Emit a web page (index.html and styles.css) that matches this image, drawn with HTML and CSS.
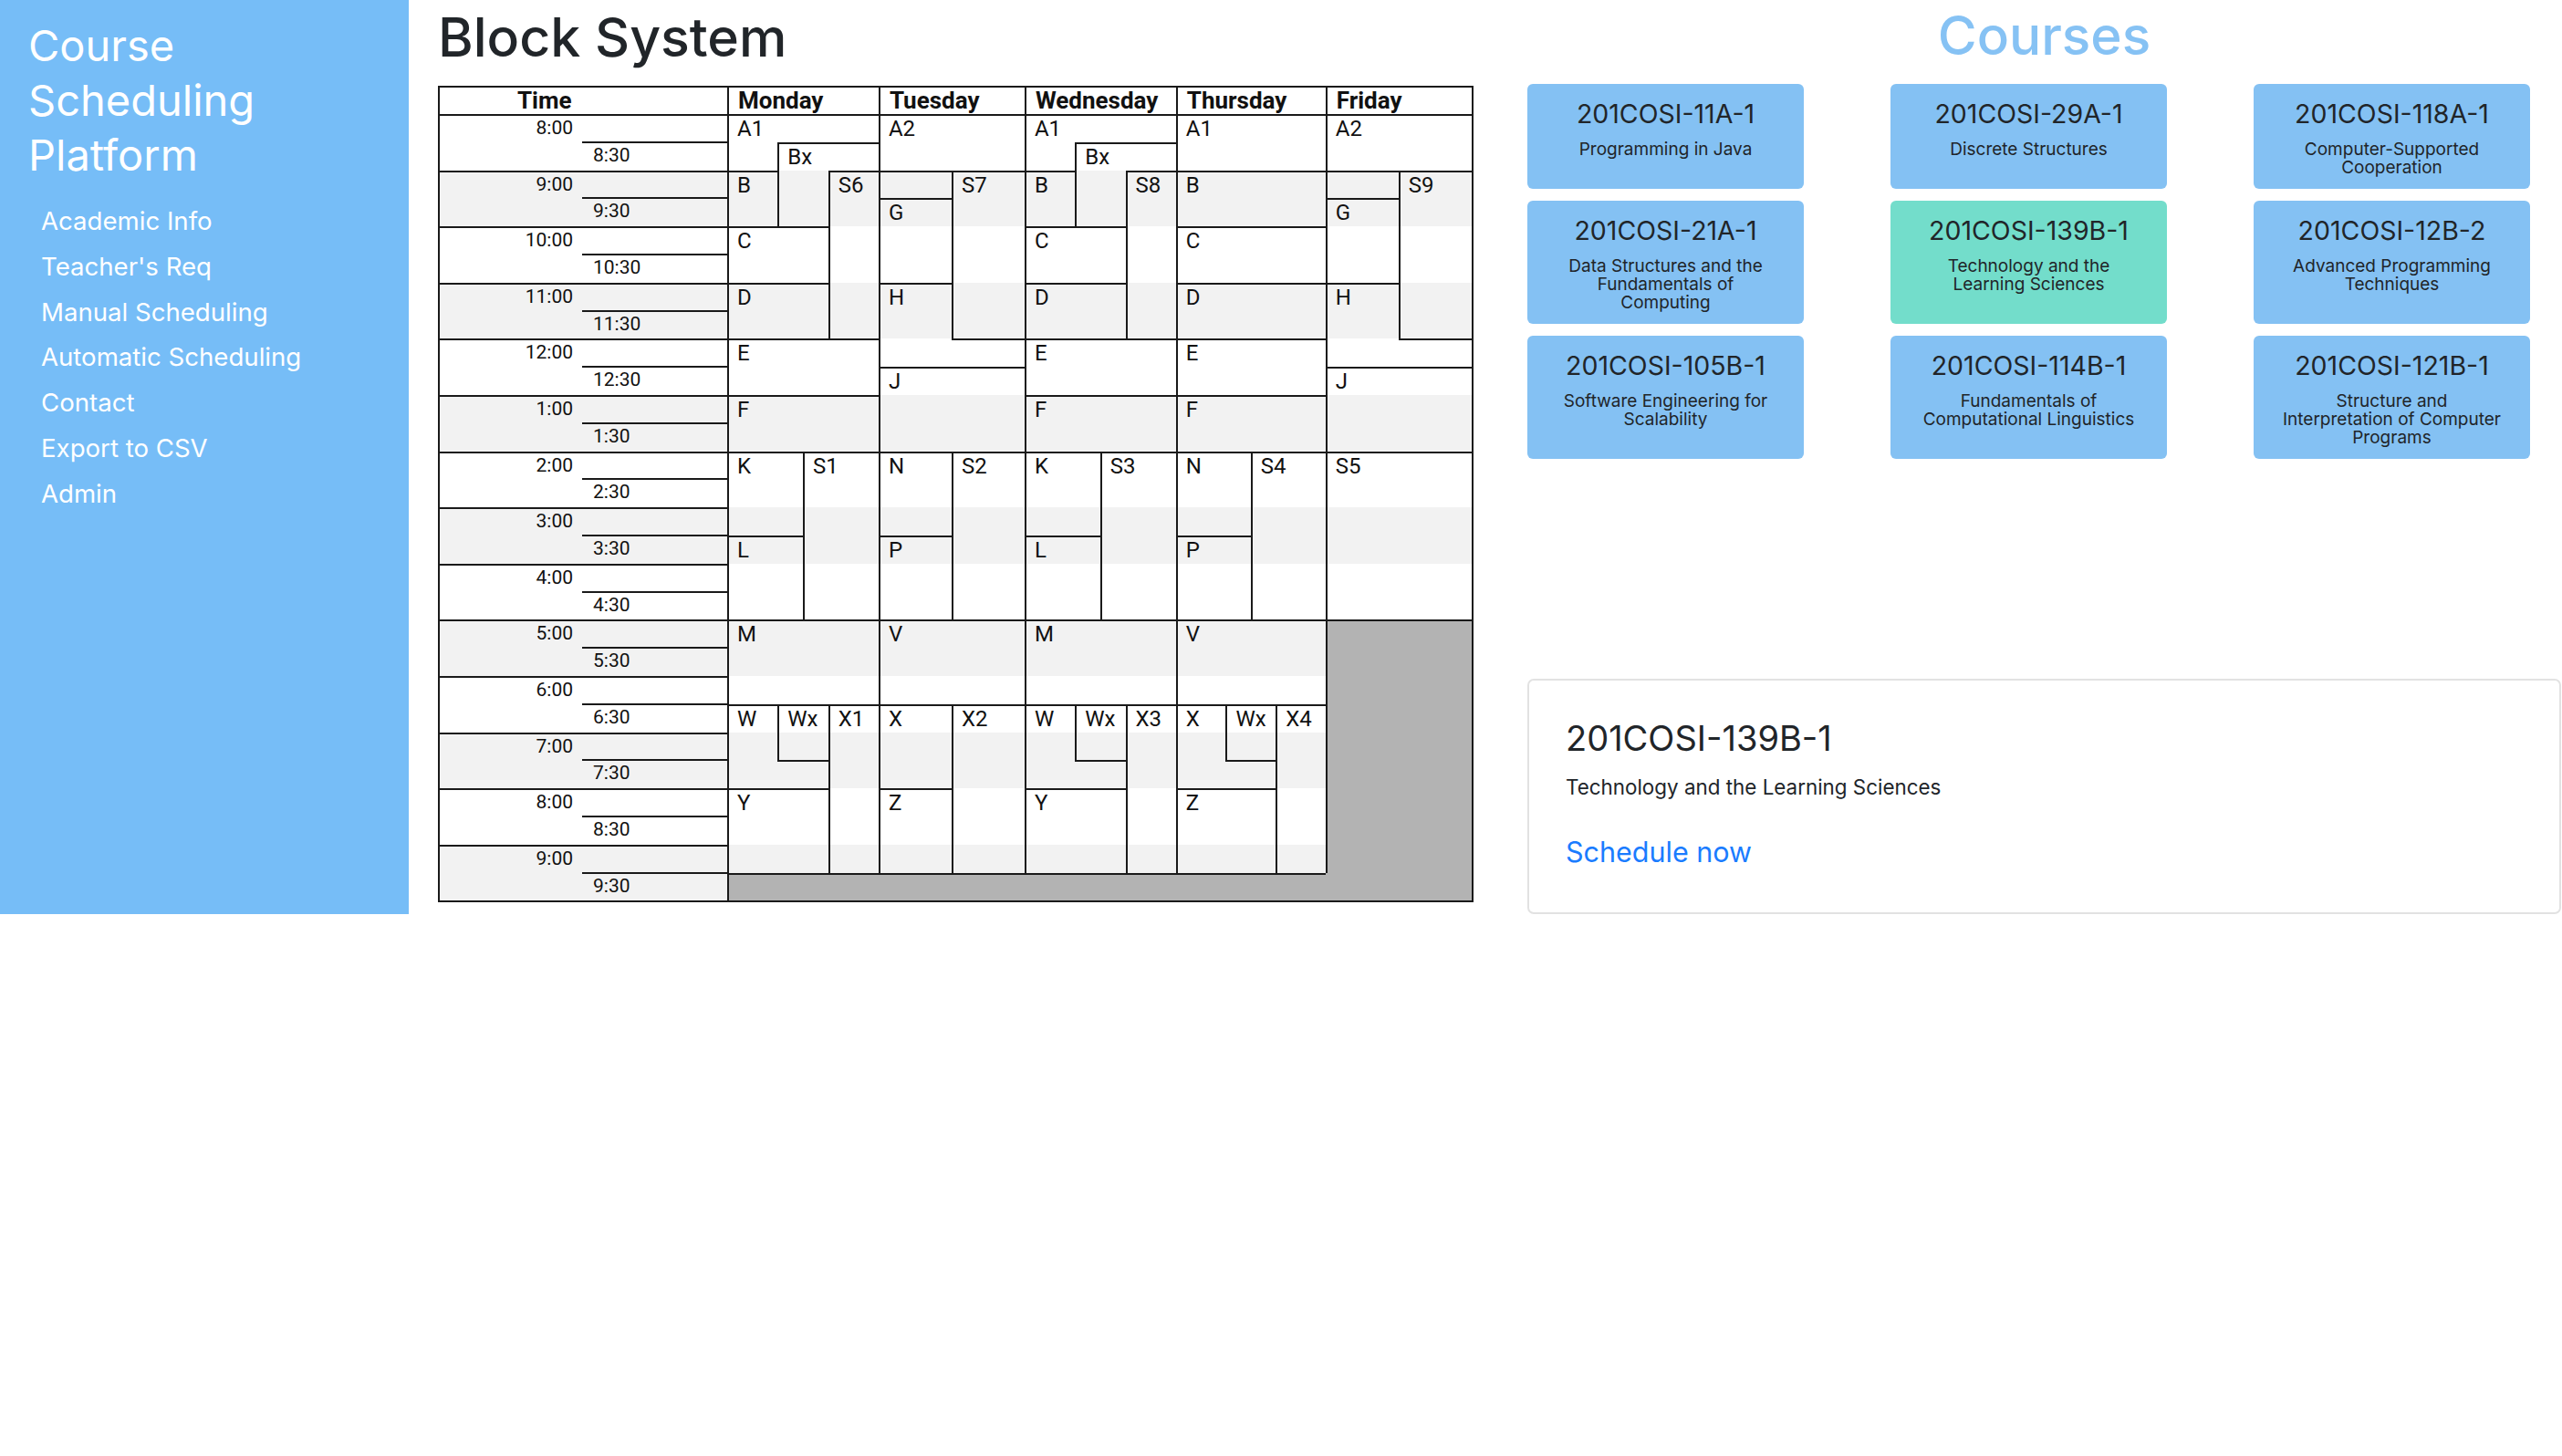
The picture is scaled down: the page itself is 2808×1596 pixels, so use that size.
FILE: index.html
```html
<!DOCTYPE html>
<html lang="en">
<head>
<meta charset="utf-8">
<title>Course Scheduling Platform</title>
<link rel="stylesheet" href="styles.css">
</head>
<body>
<div class="app">
  <aside class="sidebar">
    <h2 class="brand">Course Scheduling Platform</h2>
    <nav class="nav">
      <a href="#">Academic Info</a>
      <a href="#">Teacher's Req</a>
      <a href="#">Manual Scheduling</a>
      <a href="#">Automatic Scheduling</a>
      <a href="#">Contact</a>
      <a href="#">Export to CSV</a>
      <a href="#">Admin</a>
    </nav>
  </aside>
  <main class="main">
    <section class="left">
      <h1 class="page-title">Block System</h1>
      <div class="bs">
        <div class="stripe" style="grid-area:4/1/6/33"></div>
        <div class="stripe" style="grid-area:8/1/10/33"></div>
        <div class="stripe" style="grid-area:12/1/14/33"></div>
        <div class="stripe" style="grid-area:16/1/18/33"></div>
        <div class="stripe" style="grid-area:20/1/22/33"></div>
        <div class="stripe" style="grid-area:24/1/26/33"></div>
        <div class="stripe" style="grid-area:28/1/30/33"></div>
        <div class="dead t l" style="grid-area:29/3/30/27"></div>
        <div class="dead t l" style="grid-area:20/27/29/33"></div>
        <div class="dead" style="grid-area:29/27/30/33"></div>

        <div class="head time-head t l" style="grid-area:1/1/2/3">Time</div>
        <div class="head t l" style="grid-area:1/3/2/9">Monday</div>
        <div class="head t l" style="grid-area:1/9/2/15">Tuesday</div>
        <div class="head t l" style="grid-area:1/15/2/21">Wednesday</div>
        <div class="head t l" style="grid-area:1/21/2/27">Thursday</div>
        <div class="head t l" style="grid-area:1/27/2/33">Friday</div>

        <div class="hr t l" style="grid-area:2/1/4/3"><span class="hl">8:00</span><span class="hx"></span><span class="hh">8:30</span></div>
        <div class="hr t l" style="grid-area:4/1/6/3"><span class="hl">9:00</span><span class="hx"></span><span class="hh">9:30</span></div>
        <div class="hr t l" style="grid-area:6/1/8/3"><span class="hl">10:00</span><span class="hx"></span><span class="hh">10:30</span></div>
        <div class="hr t l" style="grid-area:8/1/10/3"><span class="hl">11:00</span><span class="hx"></span><span class="hh">11:30</span></div>
        <div class="hr t l" style="grid-area:10/1/12/3"><span class="hl">12:00</span><span class="hx"></span><span class="hh">12:30</span></div>
        <div class="hr t l" style="grid-area:12/1/14/3"><span class="hl">1:00</span><span class="hx"></span><span class="hh">1:30</span></div>
        <div class="hr t l" style="grid-area:14/1/16/3"><span class="hl">2:00</span><span class="hx"></span><span class="hh">2:30</span></div>
        <div class="hr t l" style="grid-area:16/1/18/3"><span class="hl">3:00</span><span class="hx"></span><span class="hh">3:30</span></div>
        <div class="hr t l" style="grid-area:18/1/20/3"><span class="hl">4:00</span><span class="hx"></span><span class="hh">4:30</span></div>
        <div class="hr t l" style="grid-area:20/1/22/3"><span class="hl">5:00</span><span class="hx"></span><span class="hh">5:30</span></div>
        <div class="hr t l" style="grid-area:22/1/24/3"><span class="hl">6:00</span><span class="hx"></span><span class="hh">6:30</span></div>
        <div class="hr t l" style="grid-area:24/1/26/3"><span class="hl">7:00</span><span class="hx"></span><span class="hh">7:30</span></div>
        <div class="hr t l" style="grid-area:26/1/28/3"><span class="hl">8:00</span><span class="hx"></span><span class="hh">8:30</span></div>
        <div class="hr t l" style="grid-area:28/1/30/3"><span class="hl">9:00</span><span class="hx"></span><span class="hh">9:30</span></div>

        <!-- Monday -->
        <div class="b t l" style="grid-area:2/3/3/9">A1</div>
        <div class="b l" style="grid-area:3/3/4/5"></div>
        <div class="b t l" style="grid-area:3/5/4/9">Bx</div>
        <div class="b l" style="grid-area:4/5/6/7"></div>
        <div class="b t l" style="grid-area:4/3/6/5">B</div>
        <div class="b t l" style="grid-area:4/7/10/9">S6</div>
        <div class="b t l" style="grid-area:6/3/8/7">C</div>
        <div class="b t l" style="grid-area:8/3/10/7">D</div>
        <div class="b t l" style="grid-area:10/3/12/9">E</div>
        <div class="b t l" style="grid-area:12/3/14/9">F</div>
        <div class="b t l" style="grid-area:14/3/17/6">K</div>
        <div class="b t l" style="grid-area:14/6/20/9">S1</div>
        <div class="b t l" style="grid-area:17/3/20/6">L</div>
        <div class="b t l" style="grid-area:20/3/23/9">M</div>
        <div class="b t l" style="grid-area:23/3/25/5">W</div>
        <div class="b t l" style="grid-area:23/5/25/7">Wx</div>
        <div class="b t l" style="grid-area:23/7/29/9">X1</div>
        <div class="b l" style="grid-area:25/3/26/5"></div>
        <div class="b t" style="grid-area:25/5/26/7"></div>
        <div class="b t l" style="grid-area:26/3/29/7">Y</div>

        <!-- Tuesday -->
        <div class="b t l" style="grid-area:2/9/4/15">A2</div>
        <div class="b t l" style="grid-area:4/9/5/12"></div>
        <div class="b t l" style="grid-area:4/12/10/15">S7</div>
        <div class="b t l" style="grid-area:5/9/8/12">G</div>
        <div class="b t l" style="grid-area:8/9/10/12">H</div>
        <div class="b l" style="grid-area:10/9/11/12"></div>
        <div class="b t" style="grid-area:10/12/11/15"></div>
        <div class="b t l" style="grid-area:11/9/14/15">J</div>
        <div class="b t l" style="grid-area:14/9/17/12">N</div>
        <div class="b t l" style="grid-area:14/12/20/15">S2</div>
        <div class="b t l" style="grid-area:17/9/20/12">P</div>
        <div class="b t l" style="grid-area:20/9/23/15">V</div>
        <div class="b t l" style="grid-area:23/9/26/12">X</div>
        <div class="b t l" style="grid-area:23/12/29/15">X2</div>
        <div class="b t l" style="grid-area:26/9/29/12">Z</div>

        <!-- Wednesday -->
        <div class="b t l" style="grid-area:2/15/3/21">A1</div>
        <div class="b l" style="grid-area:3/15/4/17"></div>
        <div class="b t l" style="grid-area:3/17/4/21">Bx</div>
        <div class="b l" style="grid-area:4/17/6/19"></div>
        <div class="b t l" style="grid-area:4/15/6/17">B</div>
        <div class="b t l" style="grid-area:4/19/10/21">S8</div>
        <div class="b t l" style="grid-area:6/15/8/19">C</div>
        <div class="b t l" style="grid-area:8/15/10/19">D</div>
        <div class="b t l" style="grid-area:10/15/12/21">E</div>
        <div class="b t l" style="grid-area:12/15/14/21">F</div>
        <div class="b t l" style="grid-area:14/15/17/18">K</div>
        <div class="b t l" style="grid-area:14/18/20/21">S3</div>
        <div class="b t l" style="grid-area:17/15/20/18">L</div>
        <div class="b t l" style="grid-area:20/15/23/21">M</div>
        <div class="b t l" style="grid-area:23/15/25/17">W</div>
        <div class="b t l" style="grid-area:23/17/25/19">Wx</div>
        <div class="b t l" style="grid-area:23/19/29/21">X3</div>
        <div class="b l" style="grid-area:25/15/26/17"></div>
        <div class="b t" style="grid-area:25/17/26/19"></div>
        <div class="b t l" style="grid-area:26/15/29/19">Y</div>

        <!-- Thursday -->
        <div class="b t l" style="grid-area:2/21/4/27">A1</div>
        <div class="b t l" style="grid-area:4/21/6/27">B</div>
        <div class="b t l" style="grid-area:6/21/8/27">C</div>
        <div class="b t l" style="grid-area:8/21/10/27">D</div>
        <div class="b t l" style="grid-area:10/21/12/27">E</div>
        <div class="b t l" style="grid-area:12/21/14/27">F</div>
        <div class="b t l" style="grid-area:14/21/17/24">N</div>
        <div class="b t l" style="grid-area:14/24/20/27">S4</div>
        <div class="b t l" style="grid-area:17/21/20/24">P</div>
        <div class="b t l" style="grid-area:20/21/23/27">V</div>
        <div class="b t l" style="grid-area:23/21/25/23">X</div>
        <div class="b t l" style="grid-area:23/23/25/25">Wx</div>
        <div class="b t l" style="grid-area:23/25/29/27">X4</div>
        <div class="b l" style="grid-area:25/21/26/23"></div>
        <div class="b t" style="grid-area:25/23/26/25"></div>
        <div class="b t l" style="grid-area:26/21/29/25">Z</div>

        <!-- Friday -->
        <div class="b t l" style="grid-area:2/27/4/33">A2</div>
        <div class="b t l" style="grid-area:4/27/5/30"></div>
        <div class="b t l" style="grid-area:4/30/10/33">S9</div>
        <div class="b t l" style="grid-area:5/27/8/30">G</div>
        <div class="b t l" style="grid-area:8/27/10/30">H</div>
        <div class="b l" style="grid-area:10/27/11/30"></div>
        <div class="b t" style="grid-area:10/30/11/33"></div>
        <div class="b t l" style="grid-area:11/27/14/33">J</div>
        <div class="b t l" style="grid-area:14/27/20/33">S5</div>
      </div>
    </section>

    <section class="right">
      <h1 class="courses-title">Courses</h1>
      <div class="cards">
        <div class="card"><h5 class="card-title">201COSI-11A-1</h5><p class="card-text">Programming in Java</p></div>
        <div class="card"><h5 class="card-title">201COSI-29A-1</h5><p class="card-text">Discrete Structures</p></div>
        <div class="card"><h5 class="card-title">201COSI-118A-1</h5><p class="card-text">Computer-Supported Cooperation</p></div>
        <div class="card"><h5 class="card-title">201COSI-21A-1</h5><p class="card-text">Data Structures and the Fundamentals of Computing</p></div>
        <div class="card selected"><h5 class="card-title">201COSI-139B-1</h5><p class="card-text">Technology and the Learning Sciences</p></div>
        <div class="card"><h5 class="card-title">201COSI-12B-2</h5><p class="card-text">Advanced Programming Techniques</p></div>
        <div class="card"><h5 class="card-title">201COSI-105B-1</h5><p class="card-text">Software Engineering for Scalability</p></div>
        <div class="card"><h5 class="card-title">201COSI-114B-1</h5><p class="card-text">Fundamentals of Computational Linguistics</p></div>
        <div class="card"><h5 class="card-title">201COSI-121B-1</h5><p class="card-text">Structure and Interpretation of Computer Programs</p></div>
      </div>
      <div class="detail">
        <h5 class="detail-title">201COSI-139B-1</h5>
        <p class="detail-text">Technology and the Learning Sciences</p>
        <a class="detail-link" href="#">Schedule now</a>
      </div>
    </section>
  </main>
</div>
</body>
</html>
```

FILE: styles.css
```css
* { box-sizing: border-box; }

html, body {
  margin: 0;
  padding: 0;
  background: #ffffff;
}

body {
  font-family: Inter, "Noto Sans", "Liberation Sans", sans-serif;
  color: #212529;
}

.app {
  display: flex;
  align-items: stretch;
  width: 2808px;
}

/* Sidebar */
.sidebar {
  width: 448px;
  flex: 0 0 448px;
  background: #76bdf7;
  padding: 20px 0 0 31px;
}

.brand {
  margin: 0;
  max-width: 300px;
  font-size: 47px;
  line-height: 60px;
  font-weight: 400;
  color: #ffffff;
}

.nav {
  display: flex;
  flex-direction: column;
  margin-top: 18px;
  padding-left: 14px;
}

.nav a {
  color: #ffffff;
  text-decoration: none;
  font-size: 27.6px;
  line-height: 49.8px;
}

/* Main */
.main {
  display: flex;
  gap: 59px;
  padding-left: 32px;
}

.left {
  width: 1135px;
  flex: 0 0 1135px;
}

.page-title {
  margin: 7px 0 19px;
  font-size: 59px;
  line-height: 68px;
  font-weight: 500;
  color: #212529;
}

/* Block system chart */
.bs {
  display: grid;
  grid-template-columns: 158px 159px repeat(6, 27.667px) repeat(6, 26.667px) repeat(6, 27.667px) repeat(6, 27.333px) repeat(6, 26.667px);
  grid-template-rows: 31px repeat(28, 30.8px);
  width: 1135px;
  border-right: 2px solid #1a1a1a;
  border-bottom: 2px solid #1a1a1a;
  font-family: Roboto, "Liberation Sans", sans-serif;
  color: #111111;
}

.t { border-top: 2px solid #1a1a1a; }
.l { border-left: 2px solid #1a1a1a; }

.stripe { background: #f2f2f2; }
.dead { background: #b3b3b3; }

.head {
  font-weight: 700;
  font-size: 26px;
  line-height: 1.1;
  padding: 0 0 0 10px;
  white-space: nowrap;
  overflow: hidden;
}

.time-head { padding-left: 85px; }

.hr {
  display: grid;
  grid-template-columns: 156px 1fr;
  grid-template-rows: 1fr 1fr;
  font-size: 21px;
  line-height: 1.1;
}

.hl {
  grid-column: 1;
  grid-row: 1;
  text-align: right;
  padding: 2px 10px 0 0;
}

.hx {
  grid-column: 2;
  grid-row: 1;
  border-bottom: 2px solid #1a1a1a;
}

.hh {
  grid-column: 2;
  grid-row: 2;
  padding: 2px 0 0 12px;
}

.b {
  font-size: 24px;
  line-height: 1.15;
  padding: 1px 0 0 9px;
  white-space: nowrap;
  overflow: hidden;
}

/* Right column */
.right {
  width: 1133px;
  flex: 0 0 1133px;
}

.courses-title {
  margin: 2px 0 16px;
  text-align: center;
  font-size: 58.5px;
  line-height: 74px;
  font-weight: 500;
  color: #86c2f4;
}

.cards {
  display: grid;
  grid-template-columns: repeat(3, 303px);
  column-gap: 95px;
  row-gap: 13px;
}

.card {
  background: #84c1f3;
  border-radius: 6px;
  text-align: center;
  padding: 17px 29.5px 13px;
}

.card.selected { background: #73ddcb; }

.card-title {
  margin: 0 0 13px;
  font-size: 28.5px;
  line-height: 32px;
  font-weight: 400;
  color: #212529;
}

.card-text {
  margin: 0;
  font-size: 19px;
  line-height: 20px;
  color: #212529;
}

.detail {
  margin-top: 241px;
  border: 2px solid #e2e2e2;
  border-radius: 7px;
  padding: 41px 40px 43px;
}

.detail-title {
  margin: 0 0 16px;
  font-size: 38px;
  line-height: 44px;
  font-weight: 400;
}

.detail-text {
  margin: 0 0 33px;
  font-size: 22.4px;
  line-height: 31px;
}

.detail-link {
  display: block;
  font-size: 30.5px;
  line-height: 46px;
  color: #1a7cff;
  text-decoration: none;
}
```
